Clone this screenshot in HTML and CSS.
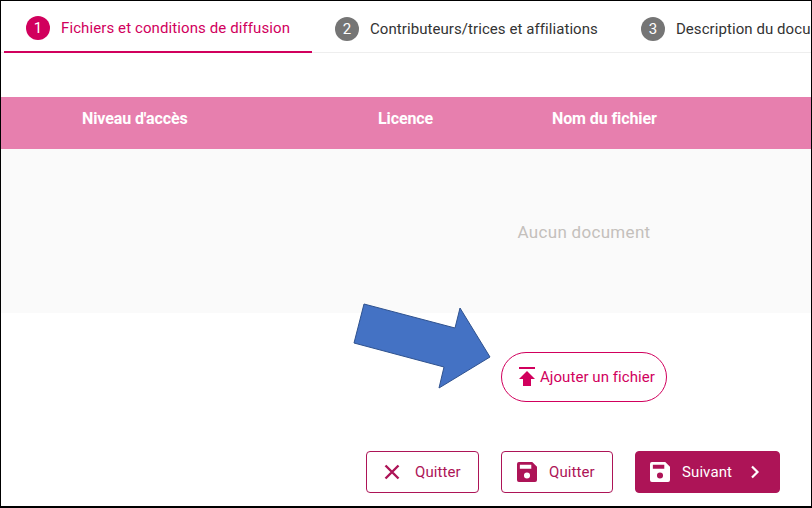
FILE: index.html
```html
<!DOCTYPE html>
<html lang="fr">
<head>
    <meta charset="UTF-8">
    <title>Dépôt de document</title>
    <link rel="stylesheet" href="styles.css">
</head>
<body>

<div class="frame">
    <div class="tabs">
        <div class="tab active"><span class="num">1</span><span>Fichiers et conditions de diffusion</span></div>
        <div class="tab second"><span class="num">2</span><span>Contributeurs/trices et affiliations</span></div>
        <div class="tab third"><span class="num">3</span><span>Description du document</span></div>
    </div>

    <div class="table-head">
        <div class="col-access">Niveau d'accès</div>
        <div class="col-licence">Licence</div>
        <div class="col-name">Nom du fichier</div>
    </div>
    <div class="table-body">Aucun document</div>

    <div class="add-row">
        <button class="add-btn">
            <svg width="16" height="20" viewBox="0 0 16 20"><path d="M0 0h16v2H0zM8 4l8 8h-4v7H4v-7H0z" fill="#d1005d"/></svg>
            Ajouter un fichier
        </button>
    </div>

    <div class="actions">
        <button class="btn btn-quit">
            <svg width="16" height="16" viewBox="0 0 16 16"><path d="M1.5 1.5l13 13M14.5 1.5l-13 13" stroke="#ad1457" stroke-width="2.400" fill="none"/></svg>
            <span>Quitter</span>
        </button>
        <button class="btn btn-save">
            <svg width="20" height="20" viewBox="0 0 21 21"><path fill-rule="evenodd" d="M2 0h14l5 5v14a2 2 0 0 1-2 2H2a2 2 0 0 1-2-2V2a2 2 0 0 1 2-2zM3 3v4h12V3zM10.500 11a3.200 3.200 0 1 0 0 6.400a3.200 3.200 0 0 0 0-6.400z" fill="#ad1457"/></svg>
            <span>Quitter</span>
        </button>
        <button class="btn btn-next">
            <svg width="20" height="20" viewBox="0 0 21 21"><path fill-rule="evenodd" d="M2 0h14l5 5v14a2 2 0 0 1-2 2H2a2 2 0 0 1-2-2V2a2 2 0 0 1 2-2zM3 3v4h12V3zM10.500 11a3.200 3.200 0 1 0 0 6.400a3.200 3.200 0 0 0 0-6.400z" fill="#fff"/></svg>
            <span>Suivant</span>
            <svg class="chev" width="10" height="14" viewBox="0 0 10 14"><path d="M2 1.500l5.500 5.500L2 12.500" stroke="#fff" stroke-width="2.200" fill="none"/></svg>
        </button>
    </div>

    <svg class="arrow" width="140" height="88" viewBox="0 0 140 88"><path d="M11 1L102 25L107 5L137 54L86 85L91 64L1 40Z" fill="#4472c4" stroke="#2f528f"/></svg>
</div>

</body>
</html>
```

FILE: styles.css
```css
* {
    box-sizing: border-box;
}
html, body {
    margin: 0;
    padding: 0;
}
body {
    font-family: Roboto, sans-serif;
    background-color: white;
}
.frame {
    position: relative;
    width: 812px;
    height: 508px;
    overflow: hidden;
    border: solid black;
    border-width: 1px 1px 2px 1px;
}

/* Onglets */
.tabs {
    display: flex;
    height: 52px;
    padding-left: 3px;
    border-bottom: 1px solid #eeeeee;
    white-space: nowrap;
    font-size: 15px;
    letter-spacing: 0.07px;
    color: #333;
}
.tab {
    display: flex;
    flex: none;
    align-items: center;
    gap: 11px;
    height: 52px;
    padding: 3px 0 0 0;
}
.tab.active {
    width: 308px;
    padding: 3px 0 0 22px;
    color: #d1005d;
    border-bottom: 2px solid #d1005d;
    letter-spacing: 0.1px;
}
.tab.second {
    margin-left: 23px;
}
.tab.third {
    margin-left: 43px;
}
.num {
    display: flex;
    align-items: center;
    justify-content: center;
    flex: none;
    width: 24px;
    height: 24px;
    border-radius: 50%;
    background-color: #757575;
    color: white;
    font-size: 15px;
    letter-spacing: 0;
}
.active .num {
    background-color: #d1005d;
}

/* Tableau */
.table-head {
    display: flex;
    align-items: center;
    height: 52px;
    margin-top: 44px;
    padding-bottom: 9px;
    background-color: #e77fae;
    color: white;
    font-size: 16px;
    font-weight: 700;
    letter-spacing: -0.1px;
}
.col-access {
    margin-left: 81px;
    width: 296px;
}
.col-licence {
    width: 174px;
}
.table-body {
    display: flex;
    align-items: center;
    justify-content: center;
    height: 164px;
    padding: 2px 0 0 356px;
    background-color: #fafafa;
    color: #c4c0bc;
    font-size: 17px;
    letter-spacing: 0.3px;
}

/* Boutons */
button {
    font-family: Roboto, sans-serif;
    cursor: pointer;
}
.add-row {
    display: flex;
    padding: 39px 0 0 500px;
}
.add-btn {
    display: flex;
    align-items: center;
    gap: 5px;
    width: 166px;
    height: 50px;
    padding: 0 0 0 17px;
    background: white;
    border: 1px solid #d1005d;
    border-radius: 25px;
    color: #d1005d;
    font-size: 15px;
    letter-spacing: 0.06px;
}
.actions {
    display: flex;
    justify-content: flex-end;
    gap: 22px;
    padding: 49px 31px 0 0;
}
.btn {
    display: flex;
    align-items: center;
    height: 42px;
    border: 1px solid #ad1457;
    border-radius: 4px;
    background: white;
    color: #ad1457;
    font-size: 15px;
    letter-spacing: 0.1px;
}
.btn-quit {
    gap: 15px;
    width: 113px;
    padding-left: 17px;
}
.btn-save {
    gap: 12px;
    width: 112px;
    padding-left: 15px;
}
.btn-next {
    width: 145px;
    padding-left: 14px;
    background-color: #ad1457;
    color: white;
}
.btn-next span {
    margin-left: 12px;
}
.btn-next .chev {
    margin-left: 18px;
}

/* Flèche par-dessus la page */
.arrow {
    position: absolute;
    left: 352px;
    top: 302px;
}
```
